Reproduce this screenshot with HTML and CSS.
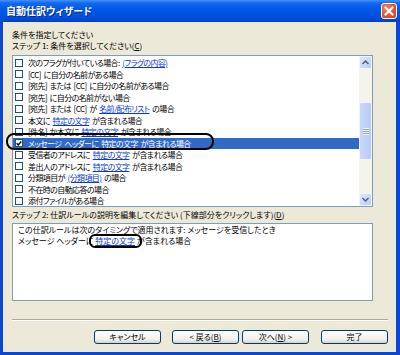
FILE: index.html
```html
<!DOCTYPE html>
<html lang="ja">
<head>
<meta charset="utf-8">
<link rel="stylesheet" href="styles.css">
</head>
<body>
<div class="window">
  <div class="titlebar">
    <span class="title">自動仕訳ウィザード</span>
    <span class="close">
      <svg width="10" height="10" viewBox="0 0 10 10"><path d="M1.5 1.5 L8.5 8.5 M8.5 1.5 L1.5 8.5" stroke="#fff" stroke-width="2" stroke-linecap="square"/></svg>
    </span>
  </div>
  <div class="body">
    <div class="label">条件を指定してください</div>
    <div class="label">ステップ 1: 条件を選択してください(<u>C</u>)</div>
    <div class="listbox">
      <div class="rows">
        <div class="row"><span class="cb"></span>次のフラグが付いている場合: <a>(フラグの内容)</a></div>
        <div class="row"><span class="cb"></span>[CC] に自分の名前がある場合</div>
        <div class="row"><span class="cb"></span>[宛先] または [CC] に自分の名前がある場合</div>
        <div class="row"><span class="cb"></span>[宛先] に自分の名前がない場合</div>
        <div class="row"><span class="cb"></span>[宛先] または [CC] が <a>名前/配布リスト</a> の場合</div>
        <div class="row"><span class="cb"></span>本文に <a>特定の文字</a> が含まれる場合</div>
        <div class="row"><span class="cb"></span>[件名] か本文に <a>特定の文字</a> が含まれる場合</div>
        <div class="row sel"><span class="cb on"><svg width="7" height="7" viewBox="0 0 7 7"><path d="M0.8 3.3 L2.6 5.2 L6.2 1.2" fill="none" stroke="#000" stroke-width="1.6"/></svg></span>メッセージ ヘッダーに <a>特定の文字</a> が含まれる場合</div>
        <div class="row"><span class="cb"></span>受信者のアドレスに <a>特定の文字</a> が含まれる場合</div>
        <div class="row"><span class="cb"></span>差出人のアドレスに <a>特定の文字</a> が含まれる場合</div>
        <div class="row"><span class="cb"></span>分類項目が <a>(分類項目)</a> の場合</div>
        <div class="row"><span class="cb"></span>不在時の自動応答の場合</div>
        <div class="row"><span class="cb"></span>添付ファイルがある場合</div>
      </div>
      <div class="scrollbar">
        <div class="sbtn"><svg width="7" height="5" viewBox="0 0 7 5"><path d="M0.5 4 L3.5 1 L6.5 4" fill="none" stroke="#4D6185" stroke-width="1.5"/></svg></div>
        <div class="track short"></div>
        <div class="thumb"><span class="grip"></span></div>
        <div class="track"></div>
        <div class="sbtn"><svg width="7" height="5" viewBox="0 0 7 5"><path d="M0.5 1 L3.5 4 L6.5 1" fill="none" stroke="#4D6185" stroke-width="1.5"/></svg></div>
      </div>
    </div>
    <div class="label step2">ステップ 2: 仕訳ルールの説明を編集してください (下線部分をクリックします)(<u>D</u>)</div>
    <div class="desc">
      <div class="line">この仕訳ルールは次のタイミングで適用されます: メッセージを受信したとき</div>
      <div class="line">メッセージ ヘッダーに <a>特定の文字</a> が含まれる場合</div>
    </div>
    <div class="sep"></div>
    <div class="buttons">
      <span class="btn cancel">キャンセル</span>
      <span class="btn back">&lt; 戻る(<u>B</u>)</span>
      <span class="btn next">次へ(<u>N</u>) &gt;</span>
      <span class="btn finish">完了</span>
    </div>
  </div>
  <div class="mark mark1"></div>
  <div class="mark mark2"></div>
</div>
</body>
</html>
```
FILE: styles.css
```css
* { box-sizing: border-box; }
html, body { margin: 0; padding: 0; }
body {
  width: 400px;
  height: 355px;
  overflow: hidden;
  font-family: "Noto Sans CJK JP", "Noto Sans", sans-serif;
  font-feature-settings: "palt";
  font-size: 8px;
  color: #000;
}
.window {
  position: relative;
  width: 400px;
  height: 355px;
  background: #0A47D4;
  display: flex;
  flex-direction: column;
}
.titlebar {
  height: 22px;
  flex: 0 0 22px;
  background: linear-gradient(#4593FF 0, #1268F0 3px, #0058E8 45%, #004EDC 80%, #0040C2 100%);
  display: flex;
  align-items: center;
  justify-content: space-between;
  padding: 0 3px 0 6px;
}
.title {
  color: #fff;
  font-weight: bold;
  font-size: 10px;
  line-height: 12px;
  text-shadow: 1px 1px 0 #0A2A8A;
}
.close {
  width: 16px;
  height: 16px;
  border: 1px solid #fff;
  border-radius: 3px;
  background: radial-gradient(circle at 35% 35%, #F08A6A 0, #E2552C 55%, #C8401A 100%);
  display: flex;
  align-items: center;
  justify-content: center;
}
.body {
  flex: 1;
  margin: 0 4px 3px 3px;
  background: #ECE9D8;
  padding: 8px 8px 0 9px;
  display: flex;
  flex-direction: column;
}
.label {
  line-height: 10.5px;
  white-space: nowrap;
}
.listbox {
  margin-top: 4px;
  width: 361px;
  height: 152px;
  border: 1px solid #7F9DB9;
  background: #fff;
  display: flex;
}
.rows {
  flex: 1;
  padding-top: 1px;
  overflow: hidden;
}
.row {
  height: 11.5px;
  line-height: 11.5px;
  padding-left: 2px;
  display: flex;
  align-items: center;
  white-space: pre;
  letter-spacing: -0.6px;
  word-spacing: 1.5px;
}
.row.sel {
  background: #316AC5;
  color: #fff;
}
.row.sel a { color: #fff; }
.cb {
  width: 8px;
  height: 8px;
  flex: 0 0 8px;
  border: 1px solid #1C5180;
  background: #fff;
  margin-right: 5px;
  display: flex;
  align-items: center;
  justify-content: center;
}
a {
  color: #0A3BD8;
  text-decoration: underline;
}
.scrollbar {
  width: 13px;
  flex: 0 0 13px;
  display: flex;
  flex-direction: column;
  background: #F4F3EC;
}
.sbtn {
  height: 13px;
  flex: 0 0 13px;
  border: 1px solid #F0F4FE;
  border-radius: 2px;
  background: linear-gradient(135deg, #DCE7FD, #BCCEF7);
  display: flex;
  align-items: center;
  justify-content: center;
}
.track { flex: 1; }
.track.short { flex: 0 0 33px; }
.thumb {
  flex: 0 0 58px;
  border: 1px solid #F0F4FE;
  border-radius: 2px;
  background: linear-gradient(90deg, #C8D8FB, #B8CBF6);
  display: flex;
  align-items: center;
  justify-content: center;
}
.grip {
  width: 6px;
  height: 7px;
  background: repeating-linear-gradient(#EEF3FE 0 1px, #8CA5DC 1px 2px);
}
.step2 { margin-top: 3px; }
.desc {
  margin-top: 2.5px;
  width: 361px;
  height: 78px;
  border: 1px solid #7F9DB9;
  background: #fff;
  padding: 0 5px;
}
.line {
  line-height: 11px;
  white-space: nowrap;
}
.sep {
  margin-top: 18px;
  height: 2px;
  border-top: 1px solid #ACA899;
  border-bottom: 1px solid #fff;
}
.buttons {
  margin-top: 9px;
  display: flex;
  justify-content: flex-end;
}
.btn {
  width: 67px;
  height: 14px;
  border: 1px solid #003C74;
  border-radius: 3px;
  background: linear-gradient(#FFFFFF, #F2F1EC 70%, #D8D2C6);
  display: flex;
  align-items: center;
  justify-content: center;
  line-height: 12px;
  white-space: pre;
}
.back { margin-left: 11px; }
.next { margin-left: 3px; }
.finish { margin-left: 12px; }
.mark {
  position: absolute;
  border: 2px solid #000;
}
.mark1 {
  left: 6px;
  top: 133px;
  width: 208px;
  height: 17px;
  border-radius: 8px;
}
.mark2 {
  left: 89px;
  top: 234px;
  width: 53px;
  height: 14px;
  border-radius: 6px;
}
```
